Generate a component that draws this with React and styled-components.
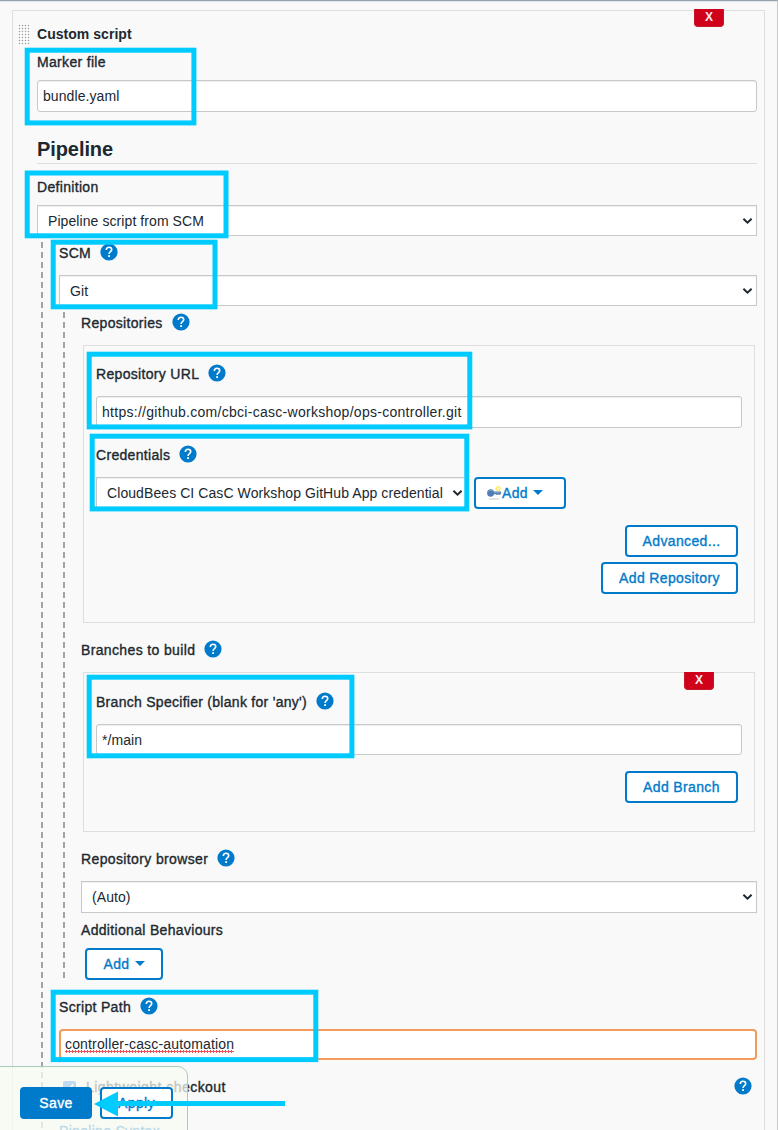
import React from "react";
import styled, { createGlobalStyle, css } from "styled-components";

const BLUE = "#007bcb";
const INK = "#20282f";

const GlobalStyle = createGlobalStyle`
  * { box-sizing: border-box; }
  body {
    margin: 0;
    background: #f9f9f9;
    color: ${INK};
    font: 14px/20px "Liberation Sans", Arial, sans-serif;
    overflow: hidden;
  }
`;

const Page = styled.main`
  position: relative;
  width: 778px;
  height: 1130px;
  overflow: hidden;
  padding: 9px 12px 0;
  background: #f9f9f9;
  border-top: 1px solid #94a1ae;
  border-right: 1px solid #c9c9c9;
  box-shadow: inset 0 1px 0 #e3e7eb;
`;

const Panel = styled.section`
  position: relative;
  height: 1180px;
  padding: 13px 7px 0 24px;
  border: 1px solid #dedede;
`;

const PanelHeader = styled.header`
  display: flex;
  align-items: center;
  height: 20px;
  margin-left: -19px;
  font-weight: 700;
  letter-spacing: 0.04px;
`;

const DragHandle = styled.span`
  width: 12px;
  height: 21px;
  margin-right: 7px;
  background: radial-gradient(circle at 1.5px 1.5px, #a2a2a2 0.4px, #fff 1.2px) 0 0 / 3px 3px;
`;

const Label = styled.div`
  display: flex;
  align-items: center;
  height: 20px;
  margin-top: ${(p) => p.$top}px;
  letter-spacing: ${(p) => p.$track ?? 0.32}px;
  -webkit-text-stroke: 0.35px currentColor;
  white-space: nowrap;
`;

const Title = styled.h2`
  height: 52px;
  margin: 0;
  padding-top: 25px;
  border-bottom: 1px solid #dcdcdc;
  font-size: 20px;
  line-height: 24px;
  letter-spacing: -0.08px;
`;

const box = css`
  display: flex;
  align-items: center;
  background: #fff;
  border: 1px solid #c8c8c8;
  box-shadow: inset 0 1px 1px rgba(0, 0, 0, 0.07);
  letter-spacing: ${(p) => p.$track ?? 0.08}px;
  white-space: nowrap;
`;

const TextField = styled.div`
  ${box}
  height: ${(p) => p.$h ?? 32}px;
  margin-top: ${(p) => p.$top}px;
  padding-left: 5px;
  border-radius: 3px;
  ${(p) =>
    p.$focused &&
    css`
      border: 2px solid #f29b5b;
      padding-left: 4px;
      border-radius: 4px;
      box-shadow: none;
    `}
`;

const SelectBox = styled.div`
  ${box}
  justify-content: space-between;
  height: ${(p) => p.$h ?? 31}px;
  width: ${(p) => p.$w ?? "auto"};
  margin-top: ${(p) => p.$top ?? 0}px;
  padding: 0 3px 0 10px;
`;

const Misspelled = styled.span`
  margin-top: -1px;
  padding-bottom: 1px;
  line-height: 16px;
  background: radial-gradient(circle, #ee5358 1px, transparent 1.4px) 0 100% / 3px 3px repeat-x;
`;

const Nest = styled.div`
  margin: ${(p) => p.$top ?? 6}px 0 0 4px;
  padding: 1px 0 0 18px;
  background: repeating-linear-gradient(#a3a3a3 0 6px, transparent 6px 10px) 0 0 / 2px 100% no-repeat;
`;

const Group = styled.div`
  position: relative;
  margin: 12px 2px 0;
  padding: ${(p) => p.$pad}px 12px 28px;
  border: 1px solid #dedede;
`;

const CredentialRow = styled.div`
  display: flex;
  gap: 7px;
  margin-top: 12px;
`;

const Actions = styled.div`
  display: flex;
  flex-direction: column;
  align-items: flex-end;
  gap: 5px;
  margin-top: 16px;
  padding-right: 4px;
`;

const Button = styled.button`
  display: flex;
  align-items: center;
  justify-content: ${(p) => (p.$start ? "flex-start" : "center")};
  width: ${(p) => p.$w}px;
  height: 32px;
  margin: ${(p) => p.$margin ?? "0"};
  padding: 0 0 0 ${(p) => (p.$start ? 11 : 0)}px;
  border: 2px solid ${BLUE};
  border-radius: 4px;
  background: ${(p) => (p.$primary ? BLUE : "#fff")};
  color: ${(p) => (p.$primary ? "#fff" : BLUE)};
  font: inherit;
  letter-spacing: ${(p) => p.$track ?? 0.36}px;
  -webkit-text-stroke: 0.35px currentColor;
`;

const DeleteButton = styled.button`
  position: absolute;
  top: ${(p) => p.$top}px;
  right: 40px;
  width: 30px;
  height: 18px;
  padding: 0;
  border: 1px solid #c41c27;
  border-top-width: 0;
  border-radius: 0 0 4px 4px;
  background: #d0021b;
  color: #f6eaea;
  font: 700 12px/17px "Liberation Sans", Arial, sans-serif;
`;

const HelpSvg = styled.svg`
  flex: none;
  margin: -2px 0 0 9px;
`;

const Caret = styled.span`
  margin: -1px 0 0 5px;
  border: 5px solid transparent;
  border-top-color: ${BLUE};
  border-bottom: 0;
`;

const CheckRow = styled.div`
  display: flex;
  align-items: center;
  height: 20px;
  margin-top: 17px;
  padding: 0 5px 0 4px;
`;

const CheckBox = styled.span`
  display: flex;
  width: 13px;
  height: 13px;
  margin-right: 10px;
  border-radius: 2px;
  background: #1978e6;
`;

const CheckLabel = styled.span`
  flex: 1;
  letter-spacing: 0.46px;
  -webkit-text-stroke: 0.35px currentColor;
`;

const SyntaxLink = styled.a`
  display: block;
  margin-top: 24px;
  color: ${BLUE};
  letter-spacing: 0.3px;
  -webkit-text-stroke: 0.35px currentColor;
`;

const SaveBar = styled.footer`
  position: absolute;
  left: -1px;
  bottom: -2px;
  display: flex;
  gap: 8px;
  width: 189px;
  height: 66px;
  padding: 20px 0 0 20px;
  border: 1px solid #a9ccb9;
  border-radius: 0 10px 0 0;
  background: rgba(247, 249, 242, 0.75);
`;

const Annotations = styled.svg`
  position: absolute;
  left: 0;
  top: -1px;
  pointer-events: none;
`;

const Help = () => (
  <HelpSvg width="18" height="18" viewBox="0 0 18 18">
    <circle cx="9" cy="9" r="8.6" fill={BLUE} />
    <path
      d="M6.3 7.1C6.3 5.3 7.4 4.3 9 4.3s2.7 1 2.7 2.4c0 1.9-2.6 2.1-2.6 4.2"
      fill="none"
      stroke="#fff"
      strokeWidth="1.6"
    />
    <rect x="8.2" y="12.2" width="1.8" height="1.8" fill="#fff" />
  </HelpSvg>
);

const Chevron = () => (
  <svg width="11" height="8" viewBox="0 0 11 8">
    <path d="M1.4 1.7 5.5 5.6 9.6 1.7" fill="none" stroke={INK} strokeWidth="2" />
  </svg>
);

const KeyIcon = () => (
  <svg width="15" height="16" viewBox="0 0 15 16">
    <ellipse cx="7" cy="14" rx="6" ry="0.9" fill="#e2e2e2" />
    <circle cx="11.2" cy="3.6" r="2" fill="#fffbd0" stroke="#f9ec6c" strokeWidth="1.4" />
    <path d="M6.5 6.4h7.6v2.8h-1.2v.9h-1.4v-.9h-1v.9H9.2v-.9H6.5z" fill="#5a82b4" />
    <ellipse cx="3.6" cy="8" rx="3.5" ry="3.8" fill="#4f7db6" />
    <path d="M1.4 6.4c1-1.4 2.8-1.7 4-.6M7 7.2h6.4" stroke="#94b4d8" strokeWidth="0.8" fill="none" />
  </svg>
);

const Select = ({ children, ...rest }) => (
  <SelectBox {...rest}>
    {children}
    <Chevron />
  </SelectBox>
);

const HIGHLIGHTS = [
  [27.2, 50.2, 166.7, 72.7],
  [27.2, 173, 198.8, 62.8],
  [53.2, 242.2, 161.8, 64.6],
  [89.2, 354.2, 380.6, 72.7],
  [92.2, 436.2, 374.6, 72.7],
  [89.2, 677.2, 262.7, 78.6],
  [53.2, 992.2, 262.6, 67.4],
];

export default function App() {
  return (
    <Page>
      <GlobalStyle />
      <Panel>
        <DeleteButton $top={-2}>X</DeleteButton>
        <PanelHeader>
          <DragHandle />
          Custom script
        </PanelHeader>
        <Label $top={8}>Marker file</Label>
        <TextField $top={8}>bundle.yaml</TextField>
        <Title>Pipeline</Title>
        <Label $top={13}>Definition</Label>
        <Select $top={8}>Pipeline script from SCM</Select>
        <Nest>
          <Label $top={0}>SCM <Help /></Label>
          <Select $top={12}>Git</Select>
          <Nest>
            <Label $top={0}>Repositories <Help /></Label>
            <Group $pad={18}>
              <Label $top={0}>Repository URL <Help /></Label>
              <TextField $top={12} $track={0.28}>
                https://github.com/cbci-casc-workshop/ops-controller.git
              </TextField>
              <Label $top={17}>Credentials <Help /></Label>
              <CredentialRow>
                <Select $w="371px">CloudBees CI CasC Workshop GitHub App credential</Select>
                <Button $w={92} $start>
                  <KeyIcon />
                  Add
                  <Caret />
                </Button>
              </CredentialRow>
              <Actions>
                <Button $w={113}>Advanced...</Button>
                <Button $w={137}>Add Repository</Button>
              </Actions>
            </Group>
            <Label $top={17} $track={0.36}>Branches to build <Help /></Label>
            <Group $pad={19}>
              <DeleteButton $top={-1}>X</DeleteButton>
              <Label $top={0} $track={0.28}>Branch Specifier (blank for 'any') <Help /></Label>
              <TextField $top={12} $h={31}>*/main</TextField>
              <Actions>
                <Button $w={113}>Add Branch</Button>
              </Actions>
            </Group>
            <Label $top={17} $track={0.37}>Repository browser <Help /></Label>
            <Select $top={12} $h={32}>(Auto)</Select>
            <Label $top={7}>Additional Behaviours</Label>
            <Button $w={78} $margin="8px 0 0 4px">
              Add
              <Caret />
            </Button>
          </Nest>
          <Label $top={17}>Script Path <Help /></Label>
          <TextField $top={12} $h={31} $track={0.16} $focused>
            <Misspelled>controller-casc-automation</Misspelled>
          </TextField>
          <CheckRow>
            <CheckBox>
              <svg width="13" height="13" viewBox="0 0 13 13">
                <path d="M3 6.8 5.5 9.3 10.2 3.4" fill="none" stroke="#fff" strokeWidth="1.8" />
              </svg>
            </CheckBox>
            <CheckLabel>Lightweight checkout</CheckLabel>
            <Help />
          </CheckRow>
          <SyntaxLink>Pipeline Syntax</SyntaxLink>
        </Nest>
      </Panel>
      <SaveBar>
        <Button $w={72} $primary>Save</Button>
        <Button $w={73}>Apply</Button>
      </SaveBar>
      <Annotations width="778" height="1130" viewBox="0 0 778 1130">
        <g fill="none" stroke="#00cbff" strokeWidth="5">
          {HIGHLIGHTS.map(([x, y, w, h]) => (
            <rect key={`${x}-${y}`} x={x} y={y} width={w} height={h} />
          ))}
          <path d="M116 1103.5H285" />
        </g>
        <path d="M94 1104 118 1091.5V1116.5Z" fill="#00cbff" />
      </Annotations>
    </Page>
  );
}
